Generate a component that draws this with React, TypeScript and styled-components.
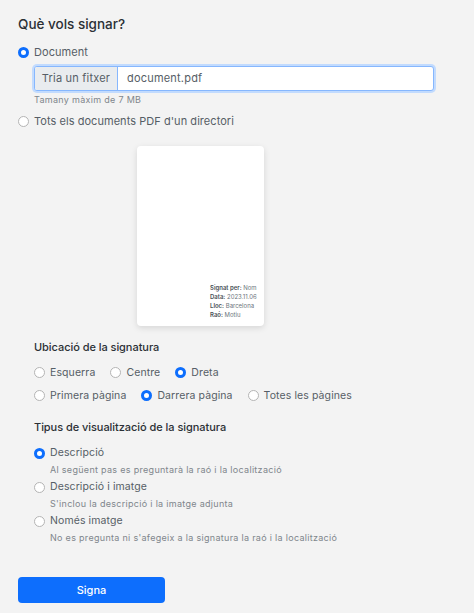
import React from 'react'
import styled, { createGlobalStyle } from 'styled-components'

const GlobalStyle = createGlobalStyle`
  html, body {
    margin: 0;
    background: #f3f3f3;
    font-family: Inter, "Liberation Sans", sans-serif;
    color: #212529;
  }
`

const Radio: React.FC<{ checked?: boolean; label: string }> = ({ checked, label }) => (
  <RadioLabel>
    <RadioDot $checked={checked} />
    {label}
  </RadioLabel>
)

export default function App() {
  return (
    <Page>
      <GlobalStyle />
      <Title>Què vols signar?</Title>
      <Radio checked label="Document" />
      <FileBlock>
        <FileInput>
          <FileButton>Tria un fitxer</FileButton>
          <FileName>document.pdf</FileName>
        </FileInput>
        <Hint>Tamany màxim de 7 MB</Hint>
      </FileBlock>
      <Radio label="Tots els documents PDF d'un directori" />

      <PreviewRow>
        <SheetPreview>
          <Stamp>
            <div><b>Signat per:</b> Nom</div>
            <div><b>Data:</b> 2023.11.06</div>
            <div><b>Lloc:</b> Barcelona</div>
            <div><b>Raó:</b> Motiu</div>
          </Stamp>
        </SheetPreview>
      </PreviewRow>

      <Section>
        <SectionTitle>Ubicació de la signatura</SectionTitle>
        <RadioRow>
          <Radio label="Esquerra" />
          <Radio label="Centre" />
          <Radio checked label="Dreta" />
        </RadioRow>
        <RadioRow>
          <Radio label="Primera pàgina" />
          <Radio checked label="Darrera pàgina" />
          <Radio label="Totes les pàgines" />
        </RadioRow>
      </Section>

      <Section>
        <SectionTitle>Tipus de visualització de la signatura</SectionTitle>
        <OptionList>
          <div>
            <Radio checked label="Descripció" />
            <OptionHint>Al següent pas es preguntarà la raó i la localització</OptionHint>
          </div>
          <div>
            <Radio label="Descripció i imatge" />
            <OptionHint>S'inclou la descripció i la imatge adjunta</OptionHint>
          </div>
          <div>
            <Radio label="Només imatge" />
            <OptionHint>No es pregunta ni s'afegeix a la signatura la raó i la localització</OptionHint>
          </div>
        </OptionList>
      </Section>

      <SubmitButton type="button">Signa</SubmitButton>
    </Page>
  )
}

const Page = styled.div`
  width: 474px;
  height: 613px;
  box-sizing: border-box;
  padding: 15px 18px 0;
  overflow: hidden;
`
const Title = styled.h1`
  margin: 0 0 11px;
  font-size: 13.5px;
  line-height: 18px;
  font-weight: 500;
  color: #2b3035;
`
const RadioLabel = styled.label`
  display: flex;
  align-items: center;
  gap: 5px;
  font-size: 11px;
  line-height: 16px;
  letter-spacing: 0.05px;
  color: #565e66;
  white-space: nowrap;
`
const RadioDot = styled.span<{ $checked?: boolean }>`
  width: 11px;
  height: 11px;
  flex: none;
  box-sizing: border-box;
  border-radius: 50%;
  background: #fff;
  border: ${(p) => (p.$checked ? '3.5px solid #0d6efd' : '1px solid #b4b4b4')};
`
const FileBlock = styled.div`
  margin: 6px 0 6px 16px;
`
const FileInput = styled.div`
  display: flex;
  width: 400px;
  height: 25px;
  box-sizing: border-box;
  border: 1px solid #86b7fe;
  border-radius: 3px;
  box-shadow: 0 0 0 2px #c2dbfe;
  background: #fff;
  overflow: hidden;
  font-size: 11px;
  letter-spacing: 0.2px;
  line-height: 23px;
`
const FileButton = styled.div`
  width: 83px;
  flex: none;
  box-sizing: border-box;
  text-align: center;
  background: #e9ecef;
  color: #565e66;
  border-right: 1px solid #86b7fe;
`
const FileName = styled.div`
  padding-left: 9px;
  color: #565e66;
`
const Hint = styled.div`
  margin-top: 2px;
  font-size: 9px;
  line-height: 14px;
  letter-spacing: 0.3px;
  color: #7f868c;
`
const PreviewRow = styled.div`
  margin: 17px 0 0 119px;
`
const SheetPreview = styled.div`
  position: relative;
  width: 127px;
  height: 180px;
  background: #fff;
  border-radius: 4px;
  box-shadow: 0 2px 6px rgba(0, 0, 0, 0.12);
`
const Stamp = styled.div`
  position: absolute;
  left: 73px;
  bottom: 7px;
  font-size: 6px;
  line-height: 9px;
  color: #6c757d;
  white-space: nowrap;
  b {
    font-weight: 600;
    color: #495057;
  }
`
const Section = styled.section`
  margin: 14px 0 0 16px;
  & + & {
    margin-top: 13px;
  }
  ${RadioLabel} {
    font-size: 10.5px;
    letter-spacing: 0.1px;
  }
`
const SectionTitle = styled.h2`
  margin: 0 0 7px;
  font-size: 11px;
  line-height: 14px;
  letter-spacing: -0.05px;
  font-weight: 500;
  color: #2b3035;
`
const RadioRow = styled.div`
  display: flex;
  gap: 15px;
  height: 23px;
  align-items: center;
`
const OptionList = styled.div`
  display: flex;
  flex-direction: column;
  gap: 1px;
  margin-top: 11px;
`
const OptionHint = styled.div`
  margin-left: 16px;
  font-size: 9px;
  line-height: 17px;
  letter-spacing: 0.3px;
  color: #7f868c;
`
const SubmitButton = styled.button`
  display: block;
  width: 147px;
  height: 26px;
  margin-top: 31px;
  border: 0;
  border-radius: 4px;
  background: #0d6efd;
  color: #fff;
  font-family: inherit;
  font-size: 11px;
  font-weight: 500;
`
